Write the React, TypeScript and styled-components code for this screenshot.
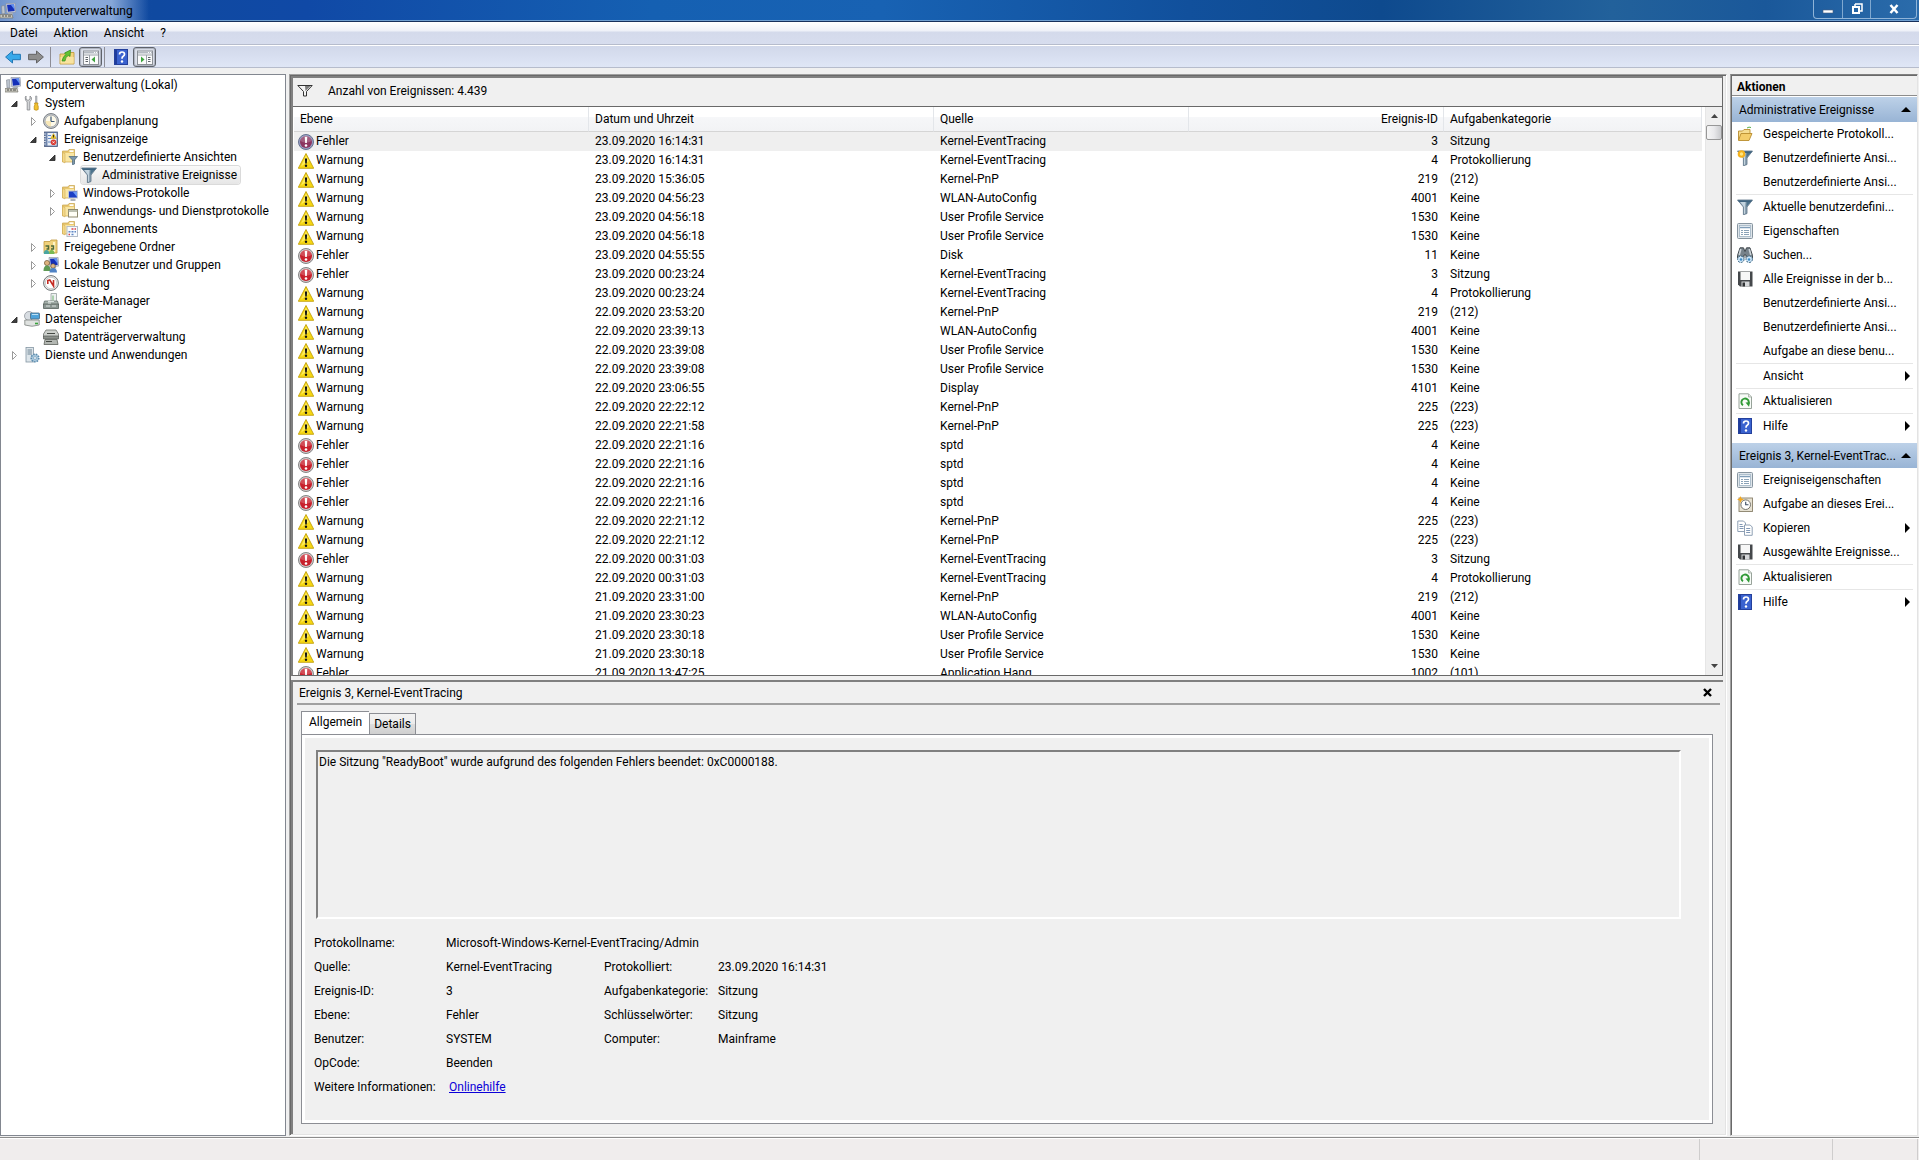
import React from "react";
import styled, { createGlobalStyle, css } from "styled-components";

const GlobalStyle = createGlobalStyle`
  *, *::before, *::after { box-sizing: border-box; }
  body {
    margin: 0;
    background: #f0f0f0;
    color: #000;
    font: 12px/18px Roboto, "Open Sans", sans-serif;
  }
  button, input, textarea {
    margin: 0;
    padding: 0;
    border: 0;
    background: none;
    color: inherit;
    font: inherit;
    text-align: left;
  }
  button { cursor: default; white-space: nowrap; }
  svg { display: block; flex: none; }
  ul { list-style: none; margin: 0; padding: 0; }
`;

/* ------------------------------------------------------------------ icons */

type IconName =
  | "computer" | "tools" | "clock" | "book" | "folderFilter" | "funnel" | "folderScreen"
  | "folderPage" | "folderCalendar" | "share" | "users" | "gauge" | "device" | "storage"
  | "disk" | "services" | "error" | "errorSelected" | "warning" | "openFolder"
  | "funnelNew" | "properties" | "find" | "save" | "refresh" | "help" | "taskNew" | "copy"
  | "back" | "forward" | "upFolder" | "paneLeft" | "paneRight" | "funnelPlain";

const Folder = () => (
  <>
    <path d="M.5 2h5.500l1-1.500h5.500v12.500H.5z" fill="#e9c871" stroke="#c9a54d" strokeWidth=".7" />
    <path d="M2.500 4h9.500v8.500H2.500z" fill="#f9e6a4" />
    <path d="M7.500 1.300h4v1.700h-4z" fill="#fff" />
    <path d="M.5 3.500l2.500 1v9.500L.5 12.500z" fill="#f5d98a" stroke="#c9a54d" strokeWidth=".5" />
  </>
);

const Monitor = () => (
  <>
    <path d="M6 .5l9-.3.800 8.800-9 1z" fill="#d8dce4" stroke="#8b92a0" strokeWidth=".7" />
    <path d="M7 1.700l7-.3.700 6.500-6.800.8z" fill="#1530b8" />
    <path d="M10.500 1.500l3.500-.2.600 5.500z" fill="#5f8ff0" />
    <path d="M8.500 9.500h4l1 2h-6z" fill="#a9b0b8" />
  </>
);

const Report = () => (
  <>
    <rect x=".5" y=".5" width="15" height="15" rx="1" fill="#dfe5ea" stroke="#8795a0" />
    <rect x="2.500" y="2.500" width="11" height="11" fill="#fff" stroke="#9fb2c2" strokeWidth=".8" />
    <path d="M3 4.500h10" stroke="#7f9db8" strokeWidth="1.500" />
    <path d="M4 7.500h2M4 9.500h2M4 11.500h2M7 7.500h5M7 9.500h5M7 11.500h5" stroke="#8ba3b8" />
  </>
);

const WindowPane = () => (
  <>
    <rect x=".5" y="2" width="15" height="13.500" fill="#fbfbfb" stroke="#8c9096" />
    <path d="M1 3.500h14" stroke="#b4bac2" strokeWidth="2" />
    <path d="M11 3.500h1M13 3.500h1" stroke="#fff" />
    <path d="M1 6h14" stroke="#9da3aa" />
  </>
);

const FunnelShape = () => (
  <>
    <path d="M.5 1h15L10 8v6.500L6.400 15.800V8z" fill="#8ea3b3" stroke="#587084" strokeWidth=".8" />
    <path d="M3 2.500h5.500L8 7.500v7L7 15V8z" fill="#c3d4df" />
    <path d="M.8 1.200h14.400l-1.200 1.800H2z" fill="#3f6480" />
    <path d="M9.500 3h4L9.300 8z" fill="#4d738c" />
  </>
);

const ErrorDisc = ({ edge, fill, ring }: { edge: string; fill: string; ring: string }) => (
  <>
    <circle cx="8" cy="8" r="7.500" fill={ring} stroke={edge} strokeWidth="1" />
    <circle cx="8" cy="8" r="6" fill={fill} />
    <path d="M2.500 7a5.500 5.500 0 0 1 11 0Q8 10 2.500 7z" fill="#fff" opacity=".2" />
    <path d="M6.700 2.800h2.600l-.5 6.200H7.200z" fill="#fff" />
    <circle cx="8" cy="11.500" r="1.300" fill="#fff" />
  </>
);

const drawings: Record<IconName, React.ReactNode> = {
  computer: (
    <>
      <Monitor />
      <path d="M1.500 3l3-.5.5 8-3 .5z" fill="#bcc4ce" stroke="#7d8590" strokeWidth=".6" />
      <path d="M0 11.500h12l1 3.500H0z" fill="#c9c8bf" stroke="#77766e" strokeWidth=".7" />
      <path d="M2 13h2M5 13h2M8 13h3" stroke="#4c4c48" strokeWidth="1.200" />
    </>
  ),
  tools: (
    <>
      <path d="M2 1v3l2 1.500L6 4V1q2 1 1.500 3.500L5.800 6.800V15H3.200V7L1.500 5Q.8 2 2 1z" fill="#d4d6d8" stroke="#85888c" strokeWidth=".8" />
      <path d="M11.500 1h1.500v7h-1.500z" fill="#b8bcc0" stroke="#8a8d90" strokeWidth=".5" />
      <path d="M10.500 8h3.500l-.5 2 .7 1v3.500q-2 1.500-4 0V11l.8-1z" fill="#f2c230" stroke="#b8860b" strokeWidth=".7" />
    </>
  ),
  clock: (
    <>
      <circle cx="8" cy="8" r="7.500" fill="#c3c7cb" stroke="#72777c" strokeWidth=".9" />
      <circle cx="8" cy="8" r="5.800" fill="#fdf9e8" stroke="#979b9f" strokeWidth=".6" />
      <path d="M8 3.500V8.500h3.500" stroke="#3c5877" strokeWidth="1.200" fill="none" />
      <path d="M8 8v5.500A5.500 5.500 0 0 1 2.500 8z" fill="#f3dfa3" opacity=".7" />
    </>
  ),
  book: (
    <>
      <rect x="1.500" y="1" width="13" height="14.500" fill="#6f86ad" stroke="#4a5a7d" strokeWidth=".8" />
      <rect x="4.500" y="2" width="9" height="12.500" fill="#e9eef6" />
      <path d="M.8 3h2M.8 5.500h2M.8 8h2M.8 10.500h2M.8 13h2" stroke="#d9dfe8" />
      <path d="M5 4.500h3M5 7.500h3M5 11h3" stroke="#5f86c4" />
      <path d="M10.500 2.500l2.800 5H7.700z" fill="#f4c81d" stroke="#a98400" strokeWidth=".4" />
      <path d="M10.500 4v2.500" stroke="#222" strokeWidth=".9" />
      <circle cx="10.500" cy="11.300" r="2.800" fill="#d93a32" />
      <path d="M9.500 10.300l2 2M11.500 10.300l-2 2" stroke="#fff" strokeWidth=".8" />
    </>
  ),
  folderFilter: (
    <>
      <Folder />
      <path d="M7 7.500h8.500l-3 3.500v4l-2 .8V11z" fill="#7c98ad" stroke="#48647a" strokeWidth=".7" />
    </>
  ),
  funnel: <FunnelShape />,
  folderScreen: (
    <>
      <Folder />
      <rect x="6.500" y="6" width="9" height="7" fill="#1c3fc4" stroke="#c3c9d4" />
      <path d="M11 7l4 0v5z" fill="#6c9af5" />
      <path d="M8.500 15h5" stroke="#8d949e" strokeWidth="1.400" />
    </>
  ),
  folderPage: (
    <>
      <Folder />
      <rect x="6.500" y="6.500" width="9" height="7.500" fill="#fffef6" stroke="#8f8a6f" />
      <path d="M6.500 8h9" stroke="#a8ad9b" strokeWidth="1.500" />
    </>
  ),
  folderCalendar: (
    <>
      <Folder />
      <rect x="5" y="5.500" width="10.500" height="10" fill="#f7fbff" stroke="#b4bcc8" />
      <path d="M9.500 8h2M12.500 8H14M6.500 13.500H8" stroke="#d9424b" strokeWidth="1.400" />
      <path d="M6.500 10.800h2M9.500 10.800h2M12.500 10.800H14M9.500 13.500h2" stroke="#5f86c4" strokeWidth="1.400" />
    </>
  ),
  share: (
    <>
      <path d="M1 2.500h6l1-1.500h6v13H1z" fill="#f0d27c" stroke="#c0983d" strokeWidth=".8" />
      <path d="M11 3v10" stroke="#fff3c4" strokeWidth="2" />
      <path d="M2.500 7h3v3h-2M8 7h2.500v3H8" fill="none" stroke="#4f6b3a" strokeWidth="1.500" />
      <path d="M.8 15q0-4 2.700-4T6.300 15z" fill="#4aa6a0" />
      <path d="M6 15q0-4 2.700-4t2.800 4z" fill="#79b955" />
    </>
  ),
  users: (
    <>
      <Monitor />
      <circle cx="4" cy="6" r="2.600" fill="#ddb27e" stroke="#5d4526" strokeWidth=".6" />
      <circle cx="10" cy="9" r="2.300" fill="#dfb98a" stroke="#5d4526" strokeWidth=".6" />
      <path d="M.5 14q0-5.500 3.500-5.500T8 14z" fill="#5f9a55" />
      <path d="M6.500 15.500q0-4.500 3.700-4.500t3.800 4.500z" fill="#4f82c4" />
    </>
  ),
  gauge: (
    <>
      <circle cx="8" cy="8" r="7.400" fill="#f0f0ee" stroke="#6d7275" />
      <circle cx="8" cy="8" r="5.700" fill="#fff" stroke="#a8adb0" strokeWidth=".6" />
      <path d="M4.800 9V5.500l2-.5 3.700 6V5" stroke="#c42b23" strokeWidth="1.600" fill="none" />
    </>
  ),
  device: (
    <>
      <path d="M8 .5h5.500v9.500H8z" fill="#eef1f2" stroke="#96a09f" strokeWidth=".8" />
      <path d="M10 2.500v5" stroke="#68b26a" />
      <path d="M1.500 8h13l1 3.500H.5z" fill="#a6b1ac" stroke="#66716d" strokeWidth=".8" />
      <path d="M.5 11h15v4.500H.5z" fill="#8b9692" stroke="#56605c" strokeWidth=".8" />
      <path d="M5 8.500h6M5 10h3M3 13h4M9 13h4" stroke="#dbe2df" />
    </>
  ),
  storage: (
    <>
      <circle cx="5" cy="5" r="4.500" fill="#d8dde2" stroke="#868d94" strokeWidth=".7" />
      <rect x="6.500" y="2" width="9" height="6" rx=".8" fill="#4fa3da" stroke="#4a6880" strokeWidth=".8" />
      <path d="M8 3.500h6" stroke="#bde1f6" />
      <path d="M.8 9h14.400v5q-7.200 2.500-14.400 0z" fill="#dfe2e0" stroke="#7d8380" strokeWidth=".8" />
      <path d="M11 12.500h3" stroke="#38a33b" strokeWidth="1.600" />
    </>
  ),
  disk: (
    <>
      <path d="M3 1h10l2.500 4v3H.5V5z" fill="#cdd0cc" stroke="#6d716c" strokeWidth=".8" />
      <path d="M.5 7h15v3H.5z" fill="#8d918c" stroke="#555954" strokeWidth=".7" />
      <path d="M2 10.500h12l1 5H1z" fill="#b3b7b2" stroke="#5d615c" strokeWidth=".8" />
      <path d="M4 4.500h8M3 12.500h6" stroke="#444843" strokeWidth="1.200" />
    </>
  ),
  services: (
    <>
      <rect x="2" y=".5" width="7.500" height="14.500" fill="#dde5ea" stroke="#8496a3" strokeWidth=".8" />
      <path d="M3.500 3h4.500M3.500 5h4.500M3.500 7h4.500" stroke="#6e8493" />
      <circle cx="11" cy="11" r="3.800" fill="#a9c8dd" stroke="#5b8bad" strokeWidth="1.600" strokeDasharray="1.600 1" />
      <circle cx="11" cy="11" r="1.400" fill="#fff" stroke="#5b8bad" strokeWidth=".6" />
    </>
  ),
  error: <ErrorDisc edge="#858585" fill="#c8202c" ring="#cfcaca" />,
  errorSelected: <ErrorDisc edge="#66708f" fill="#8c3560" ring="#98a0c4" />,
  warning: (
    <>
      <path d="M8 .5L15.700 15.300H.3z" fill="#f6d712" stroke="#c2a010" strokeWidth=".9" strokeLinejoin="round" />
      <path d="M8 2.500l3 5.500L3 13.500z" fill="#fff27a" opacity=".7" />
      <path d="M6.900 5.500h2.200l-.3 5H7.200z" fill="#111" />
      <circle cx="8" cy="12.800" r="1.200" fill="#111" />
    </>
  ),
  openFolder: (
    <>
      <path d="M1.500 14V5h4l1.500-1.500h6V8" fill="#f6dd92" stroke="#b98c2e" strokeWidth=".9" />
      <path d="M1.500 14.500L4 7.500h11l-3 7z" fill="#f4cd6a" stroke="#b98c2e" strokeWidth=".9" />
      <path d="M10 2q2-1.500 4-.5" stroke="#58b04c" fill="none" />
    </>
  ),
  funnelNew: (
    <>
      <FunnelShape />
      <circle cx="4.500" cy="4" r="3.800" fill="#f5b21d" />
      <circle cx="4.500" cy="4" r="1.700" fill="#ffe680" />
    </>
  ),
  properties: <Report />,
  find: (
    <>
      <path d="M3 .8h3.500L8 4.500 9.500.8H13L15.500 8.500V11H9V8H7v3H.5V8.500z" fill="#77828a" stroke="#343c42" strokeWidth=".9" />
      <path d="M3.800 2L2.200 8M12.200 2l1.600 6" stroke="#ccd3d8" strokeWidth="1.600" />
      <circle cx="3.800" cy="12.300" r="3.200" fill="#cfe6f7" stroke="#35617f" strokeDasharray="2 1" />
      <circle cx="12.200" cy="12.300" r="3.200" fill="#cfe6f7" stroke="#35617f" strokeDasharray="2 1" />
      <circle cx="4" cy="12.500" r="1.300" fill="#3f8dc7" />
      <circle cx="12" cy="12.500" r="1.300" fill="#3f8dc7" />
    </>
  ),
  save: (
    <>
      <path d="M1 .5h14.500v15H3l-2-2z" fill="#45484b" />
      <path d="M3.500 1h9.500v8H3.500z" fill="#f7f7f7" />
      <path d="M4.500 10.500h8v5h-8z" fill="#d5d7d9" />
      <path d="M5.500 11.500h2.500v4H5.500z" fill="#303234" />
    </>
  ),
  refresh: (
    <>
      <path d="M2 .8h9.500L14.500 4v11.500H2z" fill="#f7fbf7" stroke="#98a39a" />
      <path d="M11.500 1v3h3" fill="#dfe6df" stroke="#98a39a" strokeWidth=".7" />
      <path d="M6 12.300A3.700 3.700 0 1 1 11 11.500" fill="none" stroke="#2f9a35" strokeWidth="1.900" />
      <path d="M8.500 9.500l4.500-.2-1 4.500z" fill="#2f9a35" />
    </>
  ),
  help: (
    <>
      <rect x="1.500" y=".5" width="13" height="15" fill="#3a62cf" stroke="#24409c" />
      <path d="M3 1v14" stroke="#1f3c9c" strokeWidth="2" />
      <path d="M6.500 5.500q0-2.500 2.500-2.500t2.500 2.200q0 1.300-1.300 2.100T9 9.800" fill="none" stroke="#fff" strokeWidth="1.700" />
      <circle cx="9" cy="12.500" r="1.200" fill="#fff" />
    </>
  ),
  taskNew: (
    <>
      <rect x="2" y="2" width="13.500" height="13.500" fill="#e6e1d2" stroke="#89806a" strokeWidth=".9" />
      <circle cx="8.700" cy="8.700" r="4.800" fill="#fff" stroke="#77756e" />
      <path d="M8.700 5.800v3h2.800" fill="none" stroke="#3b4c63" strokeWidth="1.100" />
      <path d="M3.500 0l1 2.500L7 3.500 4.500 4.500l-1 2.500-1-2.500L0 3.500l2.500-1z" fill="#f5a81d" />
    </>
  ),
  copy: (
    <>
      <path d="M.8 1h5.700l2 2v8.500H.8z" fill="#fff" stroke="#8fa0b4" />
      <path d="M2.500 4.500h3M2.500 6.500h4M2.500 8.500h4" stroke="#7f97b5" />
      <path d="M7.500 5h5.700l2 2v8.300H7.500z" fill="#fff" stroke="#8fa0b4" />
      <path d="M9.200 8.500h4M9.200 10.500h4M9.200 12.500h4" stroke="#7f97b5" />
    </>
  ),
  back: (
    <path d="M.6 8L7.500 2v3.300h7.900v5.400H7.500V14z" fill="#38a9ea" stroke="#2277b5" strokeLinejoin="round" />
  ),
  forward: (
    <path d="M15.400 8L8.500 2v3.300H.6v5.400h7.900V14z" fill="#8e8e8e" stroke="#636363" strokeLinejoin="round" />
  ),
  upFolder: (
    <>
      <path d="M1 5h5l1-1.500h8V15H1z" fill="#f3d57f" stroke="#c29b41" strokeWidth=".9" />
      <path d="M1.500 8h13.200v6.500H1.500z" fill="#f8e3a0" />
      <path d="M3 12q1-5 4-6.500L5.500 4l6-3-.5 6.500-1.700-1.200Q6.500 8 6 12z" fill="#62c232" stroke="#2f8a1d" strokeWidth=".7" />
    </>
  ),
  paneLeft: (
    <>
      <WindowPane />
      <path d="M6.500 6v9" stroke="#9da3aa" />
      <path d="M2.500 8.500h2.500M2.500 10.500h2.500M2.500 12.500h2.500" stroke="#5c6268" />
      <path d="M12 7.500v6L8.500 10.500z" fill="#3ea33e" />
    </>
  ),
  paneRight: (
    <>
      <WindowPane />
      <path d="M9.500 6v9" stroke="#9da3aa" />
      <path d="M11 8.500h2.500M11 10.500h2.500M11 12.500h2.500" stroke="#5c6268" />
      <path d="M4 7.500v6l3.500-3z" fill="#3ea33e" />
    </>
  ),
  funnelPlain: (
    <>
      <path d="M.8 2.500h14.400L9.500 8.500V13H6.500V8.500z" fill="#f4f4f4" stroke="#333" />
      <path d="M8 3h5.500L8.500 8z" fill="#7b7b7b" />
    </>
  ),
};

const Icon = ({ name }: { name: IconName }) => (
  <svg width="16" height="16" viewBox="0 0 16 16" aria-hidden="true">{drawings[name]}</svg>
);

/* ------------------------------------------------------------- window frame */

const Window = styled.div`
  display: flex;
  flex-direction: column;
  height: 100vh;
  overflow: hidden;
`;

const TitleBar = styled.header`
  display: flex;
  justify-content: space-between;
  height: 22px;
  flex: none;
  border-bottom: 1px solid #16305c;
  box-shadow: inset 0 -1px 0 #6f9fd0;
  background: linear-gradient(90deg, #1d4fa3 0, #0f49a0 8%, #1049a6 16%, #1560b2 34%, #1862b3 46%, #11509c 62%, #0e4a8e 72%, #22619b 84%, #1a589a 92%, #2b6cab 100%);
`;

const TitleText = styled.h1`
  display: flex;
  align-items: center;
  gap: 5px;
  margin: 0;
  padding: 0 16px 0 0;
  font-size: 12px;
  font-weight: 400;
  background: linear-gradient(90deg, #6f93cc 0, #8fadda 20%, #86a7d8 75%, transparent 100%);
`;

const WindowButtons = styled.div`
  display: flex;
  align-self: flex-start;
  height: 19px;
  margin-right: 2px;
  border: 1px solid #8fb4d8;
  border-top: 0;
  border-radius: 0 0 4px 4px;
`;

const WindowButton = styled.button<{ $wide?: boolean }>`
  display: flex;
  align-items: center;
  justify-content: center;
  width: ${(p) => (p.$wide ? 46 : 28)}px;
  & + & { border-left: 1px solid #7fa8d0; }
`;

const MenuBar = styled.nav`
  display: flex;
  flex: none;
  height: 23px;
  padding: 0 2px;
  border-bottom: 1px solid #b6bccc;
  background: linear-gradient(#fff 0, #eef1f8 9px, #d4daeb 10px, #d7ddee 100%);
`;

const MenuItem = styled.button`
  padding: 0 8px;
`;

const ToolBar = styled.div`
  display: flex;
  align-items: center;
  flex: none;
  height: 23px;
  padding: 0 5px;
  gap: 2px;
  border-top: 1px solid #fff;
  border-bottom: 1px solid #b6bccc;
  background: linear-gradient(#d1d8ea, #dfe6f6);
`;

const ToolGroup = styled.div`
  display: flex;
  align-items: center;
  gap: 4px;
  & + & { border-left: 1px solid #8d8d95; padding-left: 8px; }
  &:first-child { gap: 7px; padding-right: 4px; }
`;

const ToolButton = styled.button<{ $pressed?: boolean }>`
  display: flex;
  align-items: center;
  justify-content: center;
  height: 20px;
  ${(p) =>
    p.$pressed &&
    css`
      width: 23px;
      border: 1px solid #5f636b;
      border-radius: 3px;
      background: #dde1ea;
      box-shadow: inset 0 0 1px 1px #aab0bc;
    `}
`;

const Main = styled.main`
  display: flex;
  flex: 1;
  min-height: 0;
  padding: 6px 1px 1px 0;
`;

const StatusBar = styled.footer`
  display: flex;
  justify-content: flex-end;
  flex: none;
  height: 23px;
  border-top: 1px solid #8c8c8c;
  box-shadow: inset 0 1px 0 #fff;
  background: #f0eded;
`;

const StatusCell = styled.div<{ $width: number }>`
  width: ${(p) => p.$width}px;
  margin-top: 1px;
  border-left: 1px solid #cfcdcd;
`;

/* --------------------------------------------------------------------- tree */

const TreePane = styled.aside`
  width: 286px;
  flex: none;
  margin-right: 3px;
  padding: 1px 0;
  overflow: hidden;
  border: 1px solid #828790;
  background: #fff;
`;

const TreeRow = styled.li<{ $level: number }>`
  display: flex;
  height: 18px;
  padding-left: ${(p) => (p.$level ? p.$level * 19 - 14 : 4)}px;
`;

const Expander = styled.span`
  display: flex;
  align-items: center;
  width: 18px;
  flex: none;
  padding-left: 5px;
`;

const TreeLabel = styled.button<{ $selected?: boolean }>`
  display: flex;
  align-items: center;
  gap: 5px;
  padding-right: 3px;
  border-radius: 3px;
  ${(p) =>
    p.$selected &&
    css`
      background: linear-gradient(#fafafa, #e6e6e6);
      box-shadow: 0 0 0 1px #dadada;
    `}
`;

type TreeEntry = [level: number, state: "open" | "closed" | "leaf", icon: IconName, label: string];

const tree: TreeEntry[] = [
  [0, "leaf", "computer", "Computerverwaltung (Lokal)"],
  [1, "open", "tools", "System"],
  [2, "closed", "clock", "Aufgabenplanung"],
  [2, "open", "book", "Ereignisanzeige"],
  [3, "open", "folderFilter", "Benutzerdefinierte Ansichten"],
  [4, "leaf", "funnel", "Administrative Ereignisse"],
  [3, "closed", "folderScreen", "Windows-Protokolle"],
  [3, "closed", "folderPage", "Anwendungs- und Dienstprotokolle"],
  [3, "leaf", "folderCalendar", "Abonnements"],
  [2, "closed", "share", "Freigegebene Ordner"],
  [2, "closed", "users", "Lokale Benutzer und Gruppen"],
  [2, "closed", "gauge", "Leistung"],
  [2, "leaf", "device", "Geräte-Manager"],
  [1, "open", "storage", "Datenspeicher"],
  [2, "leaf", "disk", "Datenträgerverwaltung"],
  [1, "closed", "services", "Dienste und Anwendungen"],
];

const TreeArrow = ({ open }: { open: boolean }) => (
  <svg width="7" height="10" viewBox="0 0 7 10" aria-hidden="true">
    {open ? (
      <path d="M6 3V8.500H.5z" fill="#404040" stroke="#222" strokeWidth=".8" />
    ) : (
      <path d="M1.500 1.500v8L5.500 5.500z" fill="#fff" stroke="#9a9a9a" />
    )}
  </svg>
);

/* --------------------------------------------------------------- event list */

const Center = styled.section`
  display: flex;
  flex-direction: column;
  flex: 1;
  min-width: 0;
  border: 1px solid;
  border-color: #a0a0a0 #fff #fff #a0a0a0;
  box-shadow: inset 1px 1px 0 #696969, inset -1px -1px 0 #e3e3e3;
  padding: 1px 3px 1px 1px;
`;

const ListPanel = styled.div`
  display: flex;
  flex-direction: column;
  flex: 1;
  min-height: 0;
  border: 1px solid #696969;
  border-top: 2px solid #808080;
  border-left: 2px solid #808080;
`;

const ListCaption = styled.div`
  display: flex;
  align-items: center;
  gap: 15px;
  flex: none;
  height: 29px;
  padding: 0 0 2px 4px;
  border-bottom: 1px solid #696969;
`;

const ListBody = styled.div`
  display: flex;
  flex: 1;
  min-height: 0;
  padding-left: 1px;
  background: #fff;
`;

const TableClip = styled.div`
  flex: 1;
  min-width: 0;
  padding-right: 3px;
  overflow: hidden;
`;

const Table = styled.table`
  width: 100%;
  table-layout: fixed;
  border-collapse: separate;
  border-spacing: 0;
`;

const HeadCell = styled.th<{ $right?: boolean }>`
  height: 25px;
  padding: 0 5px 0 6px;
  font-weight: 400;
  text-align: ${(p) => (p.$right ? "right" : "left")};
  border-right: 1px solid #e3e6ea;
  border-bottom: 1px solid #d5d5d5;
  background: linear-gradient(#fff 0, #fff 40%, #f6f7f9 41%, #f2f3f5 100%);
`;

const Row = styled.tr<{ $selected?: boolean }>`
  background: ${(p) => (p.$selected ? "#efefef" : "#fff")};
`;

const Cell = styled.td<{ $right?: boolean }>`
  height: 19px;
  padding: 0 6px;
  line-height: 19px;
  white-space: nowrap;
  text-align: ${(p) => (p.$right ? "right" : "left")};
`;

const LevelCell = styled(Cell)`
  padding-left: 4px;
`;

const Level = styled.span`
  display: flex;
  align-items: center;
  gap: 2px;
`;

const ScrollTrack = styled.div`
  display: flex;
  flex-direction: column;
  flex: none;
  width: 17px;
  background: #efefef;
  border-left: 1px solid #e6e6e6;
`;

const ScrollArrow = styled.button`
  display: flex;
  align-items: center;
  justify-content: center;
  height: 18px;
`;

const ScrollThumb = styled.div`
  height: 15px;
  border: 1px solid #979797;
  border-radius: 2px;
  background: linear-gradient(90deg, #f6f6f6, #e9e9eb 50%, #c9cacd);
`;

const Spacer = styled.div`
  flex: 1;
`;

type Kind = "F" | "W";
const events: [Kind, string, string, number, string][] = [
  ["F", "23.09.2020 16:14:31", "Kernel-EventTracing", 3, "Sitzung"],
  ["W", "23.09.2020 16:14:31", "Kernel-EventTracing", 4, "Protokollierung"],
  ["W", "23.09.2020 15:36:05", "Kernel-PnP", 219, "(212)"],
  ["W", "23.09.2020 04:56:23", "WLAN-AutoConfig", 4001, "Keine"],
  ["W", "23.09.2020 04:56:18", "User Profile Service", 1530, "Keine"],
  ["W", "23.09.2020 04:56:18", "User Profile Service", 1530, "Keine"],
  ["F", "23.09.2020 04:55:55", "Disk", 11, "Keine"],
  ["F", "23.09.2020 00:23:24", "Kernel-EventTracing", 3, "Sitzung"],
  ["W", "23.09.2020 00:23:24", "Kernel-EventTracing", 4, "Protokollierung"],
  ["W", "22.09.2020 23:53:20", "Kernel-PnP", 219, "(212)"],
  ["W", "22.09.2020 23:39:13", "WLAN-AutoConfig", 4001, "Keine"],
  ["W", "22.09.2020 23:39:08", "User Profile Service", 1530, "Keine"],
  ["W", "22.09.2020 23:39:08", "User Profile Service", 1530, "Keine"],
  ["W", "22.09.2020 23:06:55", "Display", 4101, "Keine"],
  ["W", "22.09.2020 22:22:12", "Kernel-PnP", 225, "(223)"],
  ["W", "22.09.2020 22:21:58", "Kernel-PnP", 225, "(223)"],
  ["F", "22.09.2020 22:21:16", "sptd", 4, "Keine"],
  ["F", "22.09.2020 22:21:16", "sptd", 4, "Keine"],
  ["F", "22.09.2020 22:21:16", "sptd", 4, "Keine"],
  ["F", "22.09.2020 22:21:16", "sptd", 4, "Keine"],
  ["W", "22.09.2020 22:21:12", "Kernel-PnP", 225, "(223)"],
  ["W", "22.09.2020 22:21:12", "Kernel-PnP", 225, "(223)"],
  ["F", "22.09.2020 00:31:03", "Kernel-EventTracing", 3, "Sitzung"],
  ["W", "22.09.2020 00:31:03", "Kernel-EventTracing", 4, "Protokollierung"],
  ["W", "21.09.2020 23:31:00", "Kernel-PnP", 219, "(212)"],
  ["W", "21.09.2020 23:30:23", "WLAN-AutoConfig", 4001, "Keine"],
  ["W", "21.09.2020 23:30:18", "User Profile Service", 1530, "Keine"],
  ["W", "21.09.2020 23:30:18", "User Profile Service", 1530, "Keine"],
  ["F", "21.09.2020 13:47:25", "Application Hang", 1002, "(101)"],
];

/* ------------------------------------------------------------------ preview */

const Preview = styled.section`
  flex: none;
  margin-top: 4px;
  padding: 0 3px 10px 4px;
  border-top: 2px solid #808080;
  border-left: 2px solid #808080;
`;

const PreviewTitle = styled.div`
  display: flex;
  align-items: center;
  justify-content: space-between;
  height: 23px;
  padding: 0 4px 0 2px;
  border-bottom: 2px solid #a0a0a0;
`;

const CloseButton = styled.button`
  padding: 4px;
`;

const Tabs = styled.div`
  display: flex;
  align-items: flex-end;
  height: 29px;
  padding-left: 4px;
`;

const Tab = styled.button<{ $active?: boolean }>`
  height: 21px;
  padding: 0 4px;
  border: 1px solid #8c8e94;
  border-bottom: 0;
  background: linear-gradient(#f2f2f2, #ebebeb 50%, #dddddd 51%, #cfcfcf);
  ${(p) =>
    p.$active &&
    css`
      height: 23px;
      padding: 0 7px 2px;
      border-right: 0;
      background: #fff;
    `}
`;

const TabPage = styled.div`
  margin: 0 7px 0 4px;
  padding: 13px 31px 24px 9px;
  border: 1px solid #8c8e94;
  outline: 3px solid #fff;
  outline-offset: -4px;
`;

const Description = styled.textarea`
  display: block;
  width: calc(100% - 5px);
  height: 169px;
  margin-left: 5px;
  margin-top: 2px;
  padding: 0 1px;
  resize: none;
  line-height: 20px;
  border: 2px solid;
  border-color: #808080 #fff #fff #808080;
  outline: 0;
`;

const Facts = styled.div`
  display: grid;
  grid-template-columns: 132px 158px 114px 1fr;
  grid-auto-rows: 24px;
  align-items: center;
  margin-top: 12px;
  padding-left: 3px;
  white-space: nowrap;
`;

const Fact = styled.span<{ $wide?: boolean }>`
  grid-column: ${(p) => (p.$wide ? "span 3" : "auto")};
`;

const HelpLink = styled.a`
  padding-left: 3px;
  color: #0b00d8;
`;

const facts: [string, string, string?, string?][] = [
  ["Protokollname:", "Microsoft-Windows-Kernel-EventTracing/Admin"],
  ["Quelle:", "Kernel-EventTracing", "Protokolliert:", "23.09.2020 16:14:31"],
  ["Ereignis-ID:", "3", "Aufgabenkategorie:", "Sitzung"],
  ["Ebene:", "Fehler", "Schlüsselwörter:", "Sitzung"],
  ["Benutzer:", "SYSTEM", "Computer:", "Mainframe"],
  ["OpCode:", "Beenden"],
];

/* ------------------------------------------------------------------ actions */

const ActionsPane = styled.aside`
  width: 188px;
  flex: none;
  margin-left: 3px;
  border: 1px solid;
  border-color: #808080 #e3e3e3 #e3e3e3 #a0a0a0;
  box-shadow: inset 1px 1px 0 #696969;
  padding: 1px 0 0 1px;
  background: #fff;
`;

const ActionsTitle = styled.h2`
  margin: 0;
  height: 20px;
  padding: 2px 5px 0;
  font-size: 12px;
  line-height: 18px;
  font-weight: 700;
  background: #f0f0f0;
  border-bottom: 1px solid #8c8c8c;
`;

const SectionHead = styled.button`
  display: flex;
  align-items: center;
  justify-content: space-between;
  width: 100%;
  height: 25px;
  margin-top: 1px;
  padding: 0 6px 0 7px;
  background: linear-gradient(#bdd1e8, #98b4d5);
`;

const ActionList = styled.ul`
  padding-bottom: 4px;
`;

const ActionRow = styled.li<{ $ruled?: boolean }>`
  margin: 0 4px;
  ${(p) => p.$ruled && "border-top: 1px solid #e6e6e6;"}
`;

const ActionButton = styled.button`
  display: grid;
  grid-template-columns: 16px 1fr auto;
  align-items: center;
  column-gap: 10px;
  width: 100%;
  height: 24px;
  padding: 0 3px 0 1px;
`;

type ActionEntry = { icon?: IconName; label: string; menu?: boolean; ruled?: boolean };

const viewActions: ActionEntry[] = [
  { icon: "openFolder", label: "Gespeicherte Protokoll..." },
  { icon: "funnelNew", label: "Benutzerdefinierte Ansi..." },
  { label: "Benutzerdefinierte Ansi..." },
  { icon: "funnel", label: "Aktuelle benutzerdefini...", ruled: true },
  { icon: "properties", label: "Eigenschaften" },
  { icon: "find", label: "Suchen..." },
  { icon: "save", label: "Alle Ereignisse in der b..." },
  { label: "Benutzerdefinierte Ansi..." },
  { label: "Benutzerdefinierte Ansi..." },
  { label: "Aufgabe an diese benu..." },
  { label: "Ansicht", menu: true, ruled: true },
  { icon: "refresh", label: "Aktualisieren", ruled: true },
  { icon: "help", label: "Hilfe", menu: true, ruled: true },
];

const eventActions: ActionEntry[] = [
  { icon: "properties", label: "Ereigniseigenschaften" },
  { icon: "taskNew", label: "Aufgabe an dieses Erei..." },
  { icon: "copy", label: "Kopieren", menu: true },
  { icon: "save", label: "Ausgewählte Ereignisse..." },
  { icon: "refresh", label: "Aktualisieren", ruled: true },
  { icon: "help", label: "Hilfe", menu: true, ruled: true },
];

const ActionSection = ({ title, entries }: { title: string; entries: ActionEntry[] }) => (
  <section>
    <SectionHead type="button">
      {title}
      <svg width="10" height="5" viewBox="0 0 10 5" aria-hidden="true"><path d="M5 0l5 5H0z" /></svg>
    </SectionHead>
    <ActionList>
      {entries.map((entry, i) => (
        <ActionRow key={i} $ruled={entry.ruled}>
          <ActionButton type="button">
            {entry.icon ? <Icon name={entry.icon} /> : <span />}
            <span>{entry.label}</span>
            {entry.menu && (
              <svg width="5" height="10" viewBox="0 0 5 10" aria-hidden="true"><path d="M0 0l5 5-5 5z" /></svg>
            )}
          </ActionButton>
        </ActionRow>
      ))}
    </ActionList>
  </section>
);

/* ---------------------------------------------------------------------- app */

export default function App() {
  return (
    <Window>
      <GlobalStyle />
      <TitleBar>
        <TitleText><Icon name="computer" />Computerverwaltung</TitleText>
        <WindowButtons>
          <WindowButton type="button" aria-label="Minimieren">
            <svg width="12" height="12" viewBox="0 0 12 12"><path d="M1 7h10v3H1z" fill="#fff" stroke="#46607f" strokeWidth=".6" /></svg>
          </WindowButton>
          <WindowButton type="button" aria-label="Verkleinern">
            <svg width="12" height="12" viewBox="0 0 12 12">
              <path d="M4 1h7v7H9M4 1v2" fill="none" stroke="#fff" strokeWidth="1.500" />
              <path d="M2 4h6v6H2z" fill="none" stroke="#fff" strokeWidth="2" />
            </svg>
          </WindowButton>
          <WindowButton type="button" $wide aria-label="Schließen">
            <svg width="12" height="12" viewBox="0 0 12 12">
              <path d="M2.500 2l7 8M9.500 2l-7 8" stroke="#fff" strokeWidth="2.500" />
            </svg>
          </WindowButton>
        </WindowButtons>
      </TitleBar>

      <MenuBar>
        <MenuItem type="button">Datei</MenuItem>
        <MenuItem type="button">Aktion</MenuItem>
        <MenuItem type="button">Ansicht</MenuItem>
        <MenuItem type="button">?</MenuItem>
      </MenuBar>

      <ToolBar>
        <ToolGroup>
          <ToolButton type="button" aria-label="Zurück"><Icon name="back" /></ToolButton>
          <ToolButton type="button" aria-label="Vorwärts"><Icon name="forward" /></ToolButton>
        </ToolGroup>
        <ToolGroup>
          <ToolButton type="button" aria-label="Eine Ebene nach oben"><Icon name="upFolder" /></ToolButton>
          <ToolButton type="button" $pressed aria-label="Konsolenstruktur"><Icon name="paneLeft" /></ToolButton>
        </ToolGroup>
        <ToolGroup>
          <ToolButton type="button" aria-label="Hilfe"><Icon name="help" /></ToolButton>
          <ToolButton type="button" $pressed aria-label="Aktionsbereich"><Icon name="paneRight" /></ToolButton>
        </ToolGroup>
      </ToolBar>

      <Main>
        <TreePane>
          <ul>
            {tree.map(([level, state, icon, label]) => (
              <TreeRow key={label} $level={level}>
                {level > 0 && <Expander>{state !== "leaf" && <TreeArrow open={state === "open"} />}</Expander>}
                <TreeLabel type="button" $selected={label === "Administrative Ereignisse"}>
                  <Icon name={icon} />
                  {label}
                </TreeLabel>
              </TreeRow>
            ))}
          </ul>
        </TreePane>

        <Center>
          <ListPanel>
            <ListCaption>
              <Icon name="funnelPlain" />
              <span>Anzahl von Ereignissen: 4.439</span>
            </ListCaption>
            <ListBody>
              <TableClip>
                <Table>
                  <colgroup>
                    <col style={{ width: 295 }} />
                    <col style={{ width: 345 }} />
                    <col style={{ width: 255 }} />
                    <col style={{ width: 255 }} />
                    <col />
                  </colgroup>
                  <thead>
                    <tr>
                      <HeadCell>Ebene</HeadCell>
                      <HeadCell>Datum und Uhrzeit</HeadCell>
                      <HeadCell>Quelle</HeadCell>
                      <HeadCell $right>Ereignis-ID</HeadCell>
                      <HeadCell>Aufgabenkategorie</HeadCell>
                    </tr>
                  </thead>
                  <tbody>
                    {events.map(([kind, date, source, id, category], i) => (
                      <Row key={i} $selected={i === 0}>
                        <LevelCell>
                          <Level>
                            <Icon name={kind === "W" ? "warning" : i === 0 ? "errorSelected" : "error"} />
                            {kind === "W" ? "Warnung" : "Fehler"}
                          </Level>
                        </LevelCell>
                        <Cell>{date}</Cell>
                        <Cell>{source}</Cell>
                        <Cell $right>{id}</Cell>
                        <Cell>{category}</Cell>
                      </Row>
                    ))}
                  </tbody>
                </Table>
              </TableClip>
              <ScrollTrack>
                <ScrollArrow type="button" aria-label="Nach oben">
                  <svg width="7" height="4" viewBox="0 0 7 4"><path d="M3.500 0L7 4H0z" fill="#444" /></svg>
                </ScrollArrow>
                <ScrollThumb />
                <Spacer />
                <ScrollArrow type="button" aria-label="Nach unten">
                  <svg width="7" height="4" viewBox="0 0 7 4"><path d="M0 0h7L3.500 4z" fill="#444" /></svg>
                </ScrollArrow>
              </ScrollTrack>
            </ListBody>
          </ListPanel>

          <Preview>
            <PreviewTitle>
              Ereignis 3, Kernel-EventTracing
              <CloseButton type="button" aria-label="Vorschau schließen">
                <svg width="9" height="9" viewBox="0 0 9 9"><path d="M1 1l7 7M8 1L1 8" stroke="#000" strokeWidth="2.400" /></svg>
              </CloseButton>
            </PreviewTitle>
            <Tabs role="tablist">
              <Tab type="button" role="tab" aria-selected $active>Allgemein</Tab>
              <Tab type="button" role="tab" aria-selected={false}>Details</Tab>
            </Tabs>
            <TabPage role="tabpanel">
              <Description
                readOnly
                aria-label="Beschreibung"
                value={'Die Sitzung "ReadyBoot" wurde aufgrund des folgenden Fehlers beendet: 0xC0000188.'}
              />
              <Facts>
                {facts.map(([label, value, label2, value2]) => (
                  <React.Fragment key={label}>
                    <Fact>{label}</Fact>
                    <Fact $wide={!label2}>{value}</Fact>
                    {label2 && <Fact>{label2}</Fact>}
                    {label2 && <Fact>{value2}</Fact>}
                  </React.Fragment>
                ))}
                <Fact>Weitere Informationen:</Fact>
                <Fact $wide><HelpLink href="#hilfe">Onlinehilfe</HelpLink></Fact>
              </Facts>
            </TabPage>
          </Preview>
        </Center>

        <ActionsPane>
          <ActionsTitle>Aktionen</ActionsTitle>
          <ActionSection title="Administrative Ereignisse" entries={viewActions} />
          <ActionSection title="Ereignis 3, Kernel-EventTrac..." entries={eventActions} />
        </ActionsPane>
      </Main>

      <StatusBar>
        <StatusCell $width={133} />
        <StatusCell $width={85} />
        <StatusCell $width={2} />
      </StatusBar>
    </Window>
  );
}
